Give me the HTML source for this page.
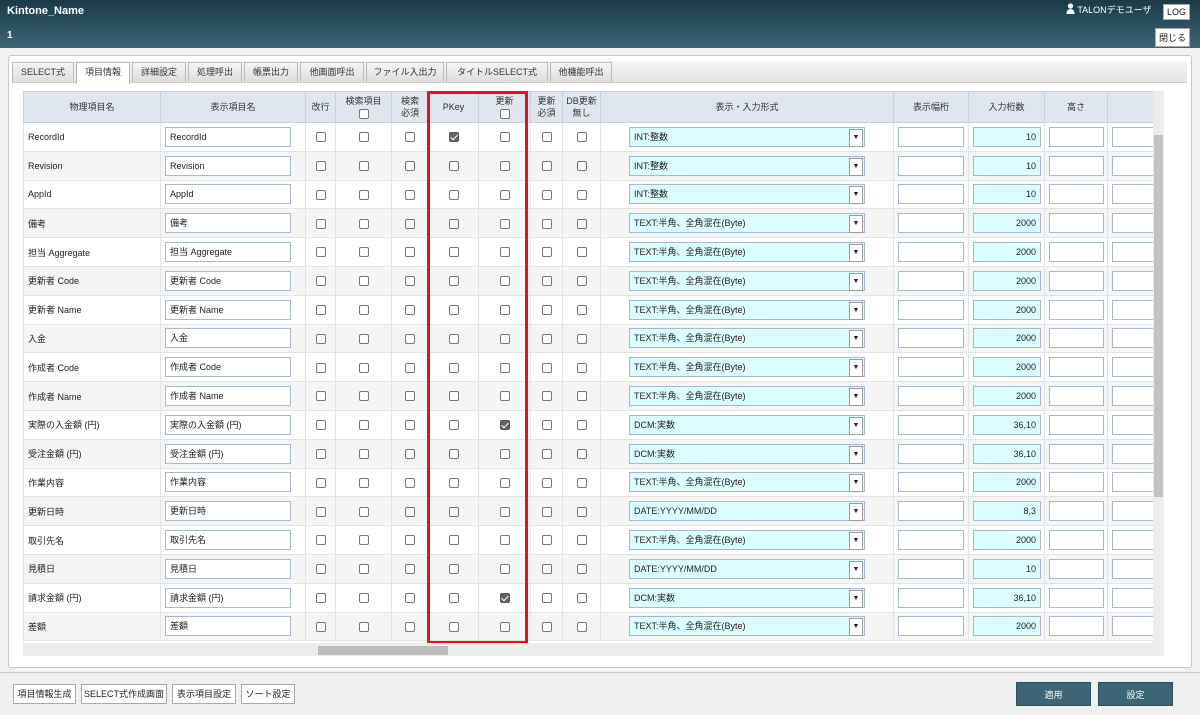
<!DOCTYPE html>
<html><head><meta charset="utf-8">
<style>
*{box-sizing:border-box;margin:0;padding:0}
body{width:1200px;height:715px;overflow:hidden;background:#f2f2f2;font-family:"Liberation Sans","Noto Sans CJK JP",sans-serif;font-size:9px;color:#222;position:relative}
.hdr{position:absolute;left:0;top:0;width:1200px;height:48px;background:linear-gradient(#1d3947,#3b6675)}
.hdr .t{position:absolute;left:7px;top:5px;color:#fff;font-weight:bold;font-size:11px}
.hdr .n{position:absolute;left:7px;top:30px;color:#fff;font-weight:bold;font-size:10px}
.user{position:absolute;left:1066px;top:3px;color:#fff;font-size:9px}
.sb{position:absolute;background:#fff;border:1px solid #aaa;font-size:9px;padding:2px 3px;color:#222}
.panel{position:absolute;left:8px;top:55px;width:1184px;height:613px;background:#fff;border:1px solid #c8c8c8;border-radius:3px}
.tabbar{position:absolute;left:12px;top:61px;width:1175px;height:22px;background:linear-gradient(#f4f4f4,#e4e4e4);border-bottom:1px solid #ccc}
.tab{position:absolute;top:62px;height:20px;border:1px solid #bbb;border-bottom:none;background:linear-gradient(#f5f5f5,#ddd);font-size:9px;text-align:center;line-height:19px;color:#333}
.tab.on{background:#fff;height:22px}
.grid{position:absolute;left:23px;top:91px;width:1130px;height:550px;overflow:hidden}
table{border-collapse:collapse;table-layout:fixed;width:1152px}
th{background:#dfe6ee;height:31px;border:1px solid #c8d0da;font-weight:normal;font-size:9px;color:#333;line-height:12px}
td{height:28.8px;border:1px solid #e3e3e3;font-size:9px;padding:0 4px;white-space:nowrap}
tr:nth-child(even) td{background:#f5f5f5}
tr:nth-child(odd) td{background:#fff}
td.c{text-align:center}
.cb{display:inline-block;width:10px;height:10px;border:1px solid #777;border-radius:2px;background:#fff;vertical-align:middle;position:relative}
.cb.k{background:#666;border-color:#555}
.cb.k:after{content:"";position:absolute;left:2px;top:0px;width:3px;height:6px;border:solid #fff;border-width:0 1.5px 1.5px 0;transform:rotate(45deg)}
.in{display:block;height:20px;border:1px solid #a9b9cc;background:#fff;padding:3px 4px;font-size:9px;line-height:12px}
.in.b{background:#dcfdff;text-align:right}
.sel{position:relative;display:block;width:236px;height:20px;border:1px solid #a9b9cc;background:#dcfdff;padding:3px 4px;line-height:12px;margin-left:24px}
.sel:after{content:"▼";position:absolute;right:1px;top:1px;width:12px;height:16px;background:#fff;border:1px solid #999;font-size:7px;text-align:center;line-height:15px}
.red{position:absolute;left:427px;top:91px;width:101px;height:553px;border:3px solid #e8101c}
.hs{position:absolute;left:23px;top:643px;width:1130px;height:13px;background:#ececec}
.thumb{position:absolute;left:318px;top:646px;width:130px;height:9px;background:#bdbdbd}
.vs{position:absolute;left:1153px;top:91px;width:11px;height:565px;background:#ececec}
.vth{position:absolute;left:1154px;top:135px;width:9px;height:362px;background:#c2c2c2}
.foot{position:absolute;left:0;top:672px;width:1200px;height:43px;background:#f0f0f0;border-top:1px solid #ccc}
.fb{position:absolute;top:684px;height:20px;border:1px solid #aaa;background:#fff;font-size:9px;line-height:18px;text-align:center;color:#222;white-space:nowrap}
.ab{position:absolute;top:682px;width:75px;height:24px;background:#3c6673;color:#fff;font-size:9px;text-align:center;line-height:24px;border:1px solid #2c5060}
</style></head><body>
<div class="hdr"><div class="t">Kintone_Name</div><div class="n">1</div>
<div class="user"><svg width="9" height="11" viewBox="0 0 9 11" style="vertical-align:-1px"><circle cx="4.5" cy="3" r="2.6" fill="#fff"/><path d="M0.5 11 Q0.5 6 4.5 6 Q8.5 6 8.5 11Z" fill="#fff"/></svg> TALONデモユーザ</div></div>
<div class="sb" style="left:1163px;top:4px">LOG</div>
<div class="sb" style="left:1155px;top:28px">閉じる</div>
<div class="panel"></div>
<div class="tabbar"></div>
<div class="tab" style="left:12px;width:62px">SELECT式</div>
<div class="tab on" style="left:76px;width:54px">項目情報</div>
<div class="tab" style="left:132px;width:54px">詳細設定</div>
<div class="tab" style="left:188px;width:54px">処理呼出</div>
<div class="tab" style="left:244px;width:54px">帳票出力</div>
<div class="tab" style="left:300px;width:64px">他画面呼出</div>
<div class="tab" style="left:366px;width:78px">ファイル入出力</div>
<div class="tab" style="left:446px;width:102px">タイトルSELECT式</div>
<div class="tab" style="left:550px;width:62px">他機能呼出</div>
<div class="grid"><table>
<colgroup><col style="width:137px"><col style="width:145px"><col style="width:30px"><col style="width:56px"><col style="width:37px"><col style="width:50px"><col style="width:52px"><col style="width:32px"><col style="width:38px"><col style="width:293px"><col style="width:75px"><col style="width:76px"><col style="width:63px"><col style="width:68px"></colgroup>
<tr><th>物理項目名</th><th>表示項目名</th><th>改行</th><th>検索項目<br><span class="cb"></span></th><th>検索<br>必須</th><th>PKey</th><th>更新<br><span class="cb"></span></th><th>更新<br>必須</th><th>DB更新<br>無し</th><th>表示・入力形式</th><th>表示幅桁</th><th>入力桁数</th><th>高さ</th><th></th></tr>
<tbody id="b"></tbody>
</table></div>
<script>
var R=[["RecordId","INT:整数","10",1,0],["Revision","INT:整数","10",0,0],["AppId","INT:整数","10",0,0],["備考","TEXT:半角、全角混在(Byte)","2000",0,0],["担当 Aggregate","TEXT:半角、全角混在(Byte)","2000",0,0],["更新者 Code","TEXT:半角、全角混在(Byte)","2000",0,0],["更新者 Name","TEXT:半角、全角混在(Byte)","2000",0,0],["入金","TEXT:半角、全角混在(Byte)","2000",0,0],["作成者 Code","TEXT:半角、全角混在(Byte)","2000",0,0],["作成者 Name","TEXT:半角、全角混在(Byte)","2000",0,0],["実際の入金額 (円)","DCM:実数","36,10",0,1],["受注金額 (円)","DCM:実数","36,10",0,0],["作業内容","TEXT:半角、全角混在(Byte)","2000",0,0],["更新日時","DATE:YYYY/MM/DD","8,3",0,0],["取引先名","TEXT:半角、全角混在(Byte)","2000",0,0],["見積日","DATE:YYYY/MM/DD","10",0,0],["請求金額 (円)","DCM:実数","36,10",0,1],["差額","TEXT:半角、全角混在(Byte)","2000",0,0],["","","",0,0]];
var h="";R.forEach(function(r){var c='<td class="c"><span class="cb"></span></td>';
h+='<tr><td>'+r[0]+'</td><td><span class="in" style="width:126px">'+r[0]+'</span></td>'+c+c+c+'<td class="c"><span class="cb'+(r[3]?' k':'')+'"></span></td><td class="c"><span class="cb'+(r[4]?' k':'')+'"></span></td>'+c+c+'<td><span class="sel">'+r[1]+'</span></td><td><span class="in" style="width:66px"></span></td><td><span class="in b" style="width:68px">'+r[2]+'</span></td><td><span class="in" style="width:55px"></span></td><td><span class="in" style="width:60px"></span></td></tr>';});
document.getElementById("b").innerHTML=h;
</script>
<div class="red"></div>
<div class="hs"></div><div class="thumb"></div>
<div class="vs"></div><div class="vth"></div>
<div class="foot"></div>
<div class="fb" style="left:13px;width:63px">項目情報生成</div>
<div class="fb" style="left:81px;width:86px">SELECT式作成画面</div>
<div class="fb" style="left:172px;width:64px">表示項目設定</div>
<div class="fb" style="left:241px;width:54px">ソート設定</div>
<div class="ab" style="left:1016px">適用</div>
<div class="ab" style="left:1098px">設定</div>
</body></html>
